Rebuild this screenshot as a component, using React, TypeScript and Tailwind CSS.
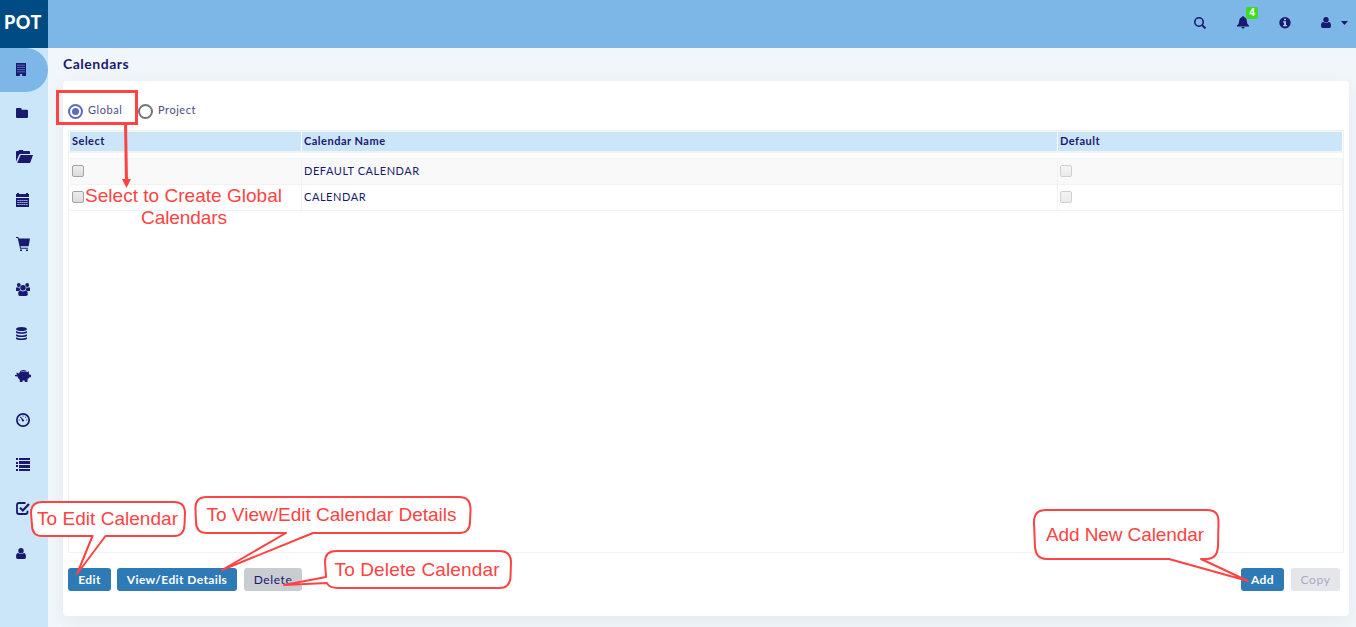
import React from "react";

const navIcons: { name: string; w: number; h: number; left: number; top: number; art: React.ReactNode }[] = [
  {
    name: "building", w: 10, h: 13, left: 16, top: 15,
    art: <>
      <path d="M0 0h10v13H6.2v-1.6H3.8V13H0z" />
      <path d="M2 1.6v8.2M4 1.6v8.2M6 1.6v8.2M8 1.6v8.2" stroke="#7db7e8" strokeWidth=".9" strokeDasharray="1.2 1" fill="none" />
      <path d="M4 11h2v1.2H4z" fill="#7db7e8" />
    </>,
  },
  { name: "folder", w: 12, h: 10, left: 16, top: 16, art: <path d="M1 0h3.6q1 0 1 1v.8H11q1 0 1 1V9q0 1-1 1H1Q0 10 0 9V1q0-1 1-1z" /> },
  {
    name: "folder-open", w: 17, h: 13, left: 16, top: 14,
    art: <>
      <path d="M0 11.8V2Q0 1 1 1h1.5L3.2 0h3.6l.7 1H13q1 0 1 1v2H4.6q-1.2 0-1.6 1z" />
      <path d="M4.6 5H17l-2.7 7.4q-.2.6-.9.6H1.2z" />
    </>,
  },
  {
    name: "calendar", w: 13, h: 14, left: 16, top: 13,
    art: <>
      <path d="M1 0h2v1h7V0h2v1h1v3H0V1h1zM0 5h13v9H0z" />
      <path d="M1.5 7.5h10.5M1.5 9.5h10.5M1.5 11.5h10.5" stroke="#cbe6f9" strokeWidth="1" strokeDasharray="1.2 .8" fill="none" />
    </>,
  },
  {
    name: "cart", w: 14, h: 14, left: 16, top: 13,
    art: <>
      <path d="M0 0h2.3l.6 1.5H14l-1.4 7.7H4.5l.4 1.5h7v1H4.1L1.7 1.1H0z" />
      <rect x="4" y="12.5" width="2" height="1.5" /><rect x="10" y="12.5" width="2" height="1.5" />
    </>,
  },
  {
    name: "users", w: 14, h: 13, left: 16, top: 15,
    art: <>
      <circle cx="2.8" cy="2" r="1.9" /><circle cx="11.2" cy="2" r="1.9" /><circle cx="7" cy="4.8" r="2.7" />
      <path d="M0 8V5.4q0-1.2 1-1.2 1 .6 2.5.3.1 1.8 1 2.6-1 .1-1.6.8zM14 8V5.4q0-1.2-1-1.2-1 .6-2.5.3-.1 1.8-1 2.6 1 .1 1.6.8zM2.2 11.2q0-3.6 2-3.6Q7 9.2 9.8 7.6q2 0 2 3.6 0 1.8-1.6 1.8H3.8q-1.6 0-1.6-1.8z" />
    </>,
  },
  { name: "database", w: 11, h: 13, left: 16, top: 15, art: <path d="M0 2C0-.7 11-.7 11 2s-11 2.7-11 0zM0 4q5.500 2.400 11 0v1.200C11 7.300 0 7.300 0 5.200zM0 7.200q5.500 2.400 11 0v1.200c0 2.100-11 2.100-11 0zM0 10.300q5.500 2.400 11 0v1.100c0 2.100-11 2.100-11 0z" /> },
  {
    name: "piggy", w: 16, h: 12, left: 15, top: 14,
    art: <>
      <path d="M4.4 2.4Q6 1.5 9 1.6q2 .1 3 .7L14 1.3l-.2 2 .8 1.4H16v2.6h-1.7q-.8 1.3-1.8 2V12H9.700v-1.500H7.500V12H4.800V9.800Q2.800 8.600 2.600 6.500L0 6.300V5l2.500-.4L1 3l2-.2.4 1z" />
      <path d="M5 1.5Q8-.5 11.500 1.200" stroke="#191970" strokeWidth="1" fill="none" />
    </>,
  },
  {
    name: "dashboard", w: 14, h: 14, left: 16, top: 13,
    art: <>
      <circle cx="7" cy="7" r="6.15" fill="none" stroke="#191970" strokeWidth="1.7" />
      <path d="M6.3 8 4.6 4.400l.6-.4 2.300 3z" /><circle cx="7" cy="7.500" r="1.100" />
      <path d="M2.700 6.400h1.100v1.100H2.700zM4 3.800h1v1H4zM6.600 2.500h1v1h-1zM9.100 3.800h1v1h-1zM10.200 6.400h1.100v1.100h-1.100z" />
    </>,
  },
  {
    name: "list", w: 14, h: 13, left: 16, top: 14,
    art: <path d="M0 0h2v2H0zM3 0h11v2H3zM0 4h2v2H0zM3 3h11v3H3zM0 7h2v2H0zM3 7h11v3H3zM0 11h2v2H0zM3 11h11v2H3z" />,
  },
  {
    name: "check", w: 14, h: 13, left: 16, top: 14,
    art: <>
      <path d="M9.5 1H3Q1 1 1 3v7q0 2 2 2h6.5q2 0 2-2V8.7" fill="none" stroke="#191970" strokeWidth="1.8" />
      <path d="m4 5.8 2.8 2.7L13 2" fill="none" stroke="#191970" strokeWidth="2.2" />
    </>,
  },
  {
    name: "user", w: 10, h: 11, left: 16, top: 16,
    art: <><circle cx="5" cy="2.7" r="2.7" /><path d="M0 9q0-3.9 2.3-3.9Q5 7 7.7 5.1 10 5.1 10 9q0 2-1.7 2H1.7Q0 11 0 9z" /></>,
  },
];

function Sidebar() {
  return (
    <nav className="flex w-12 shrink-0 flex-col bg-[#cbe6f9]">
      {navIcons.map((icon, i) => (
        <div
          key={icon.name}
          className={i === 0 ? "flex h-11 items-start rounded-r-full bg-[#7db7e8]" : "flex h-11 items-start"}
          style={{ paddingLeft: icon.left, paddingTop: icon.top }}
        >
          <svg width={icon.w} height={icon.h} viewBox={`0 0 ${icon.w} ${icon.h}`} fill="#191970" className="shrink-0 overflow-visible">
            {icon.art}
          </svg>
        </div>
      ))}
    </nav>
  );
}

function TopBar() {
  return (
    <header className="flex h-12 shrink-0 bg-[#7db7e8] text-[#191970]">
      <div className="flex w-12 items-center justify-center bg-[#004b84] pr-[2px] pb-[4px] font-['Lato',sans-serif] text-[18px] font-black tracking-[0.5px] text-white">POT</div>
      <div className="ml-auto flex items-start pt-[17px] pr-[8px]">
        <svg width="12" height="12" viewBox="0 0 12 12" fill="none" stroke="#191970" className="mr-[31px]">
          <circle cx="5" cy="5" r="4.2" strokeWidth="1.6" />
          <path d="m7.9 7.9 3.5 3.5" strokeWidth="2" />
        </svg>
        <div className="relative mr-[30px]">
          <svg width="12" height="12" viewBox="0 0 12 12" fill="#191970" className="mt-[-1px] overflow-visible">
            <path d="M5.3 0h1.400v.900Q9.600 1.500 9.700 4.500 9.800 8 12 9.500v1H0v-1Q2.200 8 2.300 4.500 2.400 1.500 5.300.900zM4.300 11h3.400Q7.500 12.500 6 12.500T4.300 11z" />
          </svg>
          <span className="absolute -top-[10px] left-[9px] flex h-3 w-3 items-center justify-center rounded-[2px] bg-[#3bdc22] pb-[2px] font-['Open_Sans',sans-serif] text-[10px] leading-none font-bold text-white">4</span>
        </div>
        <svg width="12" height="12" viewBox="0 0 12 12" className="mr-[30px]">
          <circle cx="6" cy="5.700" r="5.700" fill="#191970" />
          <path d="M5 1.700h2v1.500H5zM4 4.300h3v3.700h1v1.300H4V8h1V5.500H4z" fill="#9cc8ee" />
        </svg>
        <svg width="10" height="11" viewBox="0 0 10 11" fill="#191970" className="mr-[10px]">
          <circle cx="5" cy="2.7" r="2.7" />
          <path d="M0 9q0-3.9 2.3-3.9Q5 7 7.7 5.1 10 5.1 10 9q0 2-1.7 2H1.7Q0 11 0 9z" />
        </svg>
        <svg width="7" height="4" viewBox="0 0 7 4" fill="#191970" className="mt-[4px]"><path d="M0 0h7L3.500 4z" /></svg>
      </div>
    </header>
  );
}

function Check({ disabled = false }: { disabled?: boolean }) {
  return (
    <span
      className={
        disabled
          ? "block h-3 w-3 rounded-[2px] border border-[#d0d0d0] bg-linear-to-b from-[#f4f4f4] to-[#ebebeb]"
          : "block h-3 w-3 rounded-[2px] border border-[#a3a3a3] bg-linear-to-b from-[#ededed] to-[#dcdcdc]"
      }
    />
  );
}

function Row({ name, striped }: { name: string; striped?: boolean }) {
  return (
    <div className={`grid h-[26px] grid-cols-[232px_756px_1fr] border-b border-[#f2f2f2] text-[11px] tracking-[0.55px] ${striped ? "bg-[#f9f9f9]" : "bg-white"}`}>
      <div className="flex items-start border-r border-[#f2f2f2] pt-[6px] pl-[2px]"><Check /></div>
      <div className="flex items-center border-r border-[#f2f2f2] pl-[2px]">{name}</div>
      <div className="flex items-start border-r border-[#f2f2f2] pt-[6px] pl-[2px]"><Check disabled /></div>
    </div>
  );
}

function CalendarTable() {
  return (
    <div className="flex h-[423px] flex-col border border-[#f2f2f2]">
      <div className="h-[22px] border-t border-b-2 border-[#f2f2f2] px-px">
        <div className="grid h-[19px] grid-cols-[232px_756px_1fr] bg-[#cbe6f9] text-[11px] leading-[18px] font-bold tracking-[0.5px]">
          <div className="border-r border-white pl-[2px]">Select</div>
          <div className="border-r border-white pl-[2px]">Calendar Name</div>
          <div className="pl-[2px]">Default</div>
        </div>
      </div>
      <div className="mt-[5px] ml-px border-t border-[#f2f2f2]">
        <Row name="DEFAULT CALENDAR" striped />
        <Row name="CALENDAR" />
      </div>
    </div>
  );
}

function Annotations() {
  return (
    <svg className="pointer-events-none absolute inset-0" width="1356" height="627" viewBox="0 0 1356 627">
      <g fill="none" stroke="#fd4343" strokeWidth="2" strokeLinejoin="round">
        <rect x="57.5" y="91.5" width="79" height="32" strokeWidth="3" strokeLinejoin="miter" />
        <path d="M125.5 122 126.5 182" strokeWidth="3" />
        <path d="M126.5 188 122 179h9z" fill="#fd4343" stroke="none" />
        <g fill="white">
          <path d="M42 502H174Q185 502 185 513L184.500 525Q184 536 174 536H105.500L77 574 92.500 536H42Q32 536 32 525L31 513Q31 502 42 502z" />
          <path d="M207 497H459Q470.500 497 470.500 509L470 522Q470 533 459 533H313L222 570 286 533H207Q196 533 196 522L195.500 509Q195 497 207 497z" />
          <path d="M336 551H499Q511 551 511 562L510.500 577Q510 588 499 588H338Q329 588 327 583L284 585 326 577 325 562Q325 551 336 551z" />
          <path d="M1046 510H1207Q1219 510 1218.500 522L1218 547Q1217 559 1207 559H1201L1248 581 1169 559H1046Q1036 559 1035 547L1034 522Q1034 510 1046 510z" />
        </g>
      </g>
      <g fill="#fd4343" fontFamily="'Liberation Sans', Arial, sans-serif" fontSize="19" textAnchor="middle">
        <text x="183.5" y="202" textLength="197">Select to Create Global</text>
        <text x="184" y="224" textLength="86">Calendars</text>
        <text x="107.5" y="525" textLength="141">To Edit Calendar</text>
        <text x="331.5" y="521" textLength="250">To View/Edit Calendar Details</text>
        <text x="417" y="576" textLength="165">To Delete Calendar</text>
        <text x="1125" y="541" textLength="158">Add New Calendar</text>
      </g>
    </svg>
  );
}

const primary = "flex h-[23px] items-center justify-center rounded-[3px] bg-[#2e7ab6] text-[12px] font-bold tracking-[0.4px] text-white";

export default function App() {
  return (
    <div className="relative flex h-[627px] w-[1356px] flex-col overflow-hidden bg-[#f1f6fa] font-['Lato',sans-serif] text-[#191970]">
      <TopBar />
      <div className="flex min-h-0 flex-1">
        <Sidebar />
        <main className="flex flex-1 flex-col pr-[7px] pl-[15px]">
          <h1 className="h-[33px] pt-[6px] text-[14px] leading-5 font-bold tracking-[0.5px]">Calendars</h1>
          <section className="h-[535px] rounded bg-white pt-[19px] pr-[5px] pl-[5px] shadow-[0_5px_20px_rgba(0,0,0,0.06)]">
            <div className="flex h-[22px] items-center text-[11px] tracking-[0.55px] text-[#4b4b86]">
              <span className="flex h-[15px] w-[15px] items-center justify-center rounded-full border-2 border-[#5c6bc0]">
                <span className="h-[7px] w-[7px] rounded-full bg-[#5c6bc0]" />
              </span>
              <span className="ml-[5px] w-[50px] pb-[2px]">Global</span>
              <span className="h-[15px] w-[15px] rounded-full border-2 border-[#757575]" />
              <span className="ml-[5px] pb-[2px]">Project</span>
            </div>
            <div className="mt-[8px]"><CalendarTable /></div>
            <div className="mt-[15px] flex pr-[4px]">
              <div className={`${primary} w-[43px]`}>Edit</div>
              <div className={`${primary} ml-[6px] w-[120px]`}>View/Edit Details</div>
              <div className="ml-[7px] flex h-[23px] w-[58px] items-center justify-center rounded-[3px] bg-[#c9ccd1] text-[12px] tracking-[0.6px]">Delete</div>
              <div className={`${primary} ml-auto w-[43px]`}>Add</div>
              <div className="ml-[7px] flex h-[23px] w-[49px] items-center justify-center rounded-[3px] bg-[#e5e6e9] text-[12px] tracking-[0.6px] text-[#a9a8cb]">Copy</div>
            </div>
          </section>
        </main>
      </div>
      <Annotations />
    </div>
  );
}
